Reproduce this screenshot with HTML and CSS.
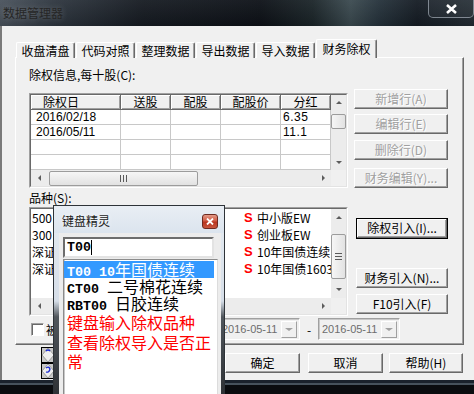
FILE: index.html
```html
<!DOCTYPE html>
<html lang="zh-CN">
<head>
    <meta charset="UTF-8">
    <meta name="viewport" content="width=device-width, initial-scale=1.0">
    <title>数据管理器</title>
    <link rel="stylesheet" href="styles.css">
</head>
<body>
<div class="screen">
    <div class="window">
        <div class="titlebar">
            <span class="title">数据管理器</span>
            <span class="win-close">
                <svg width="13" height="10" viewBox="0 0 13 10"><path d="M2 1 L11 9 M11 1 L2 9" stroke="#fff" stroke-width="2.6"/></svg>
            </span>
        </div>
        <div class="client">
            <div class="tabs">
                <span class="tab">收盘清盘</span>
                <span class="tab">代码对照</span>
                <span class="tab">整理数据</span>
                <span class="tab">导出数据</span>
                <span class="tab">导入数据</span>
                <span class="tab active">财务除权</span>
            </div>
            <div class="panel">
                <div class="caption">除权信息,每十股(C):</div>
                <div class="panel-row">
                    <div class="sunken grid-box">
                        <div class="sunken-in">
                            <div class="grid-main">
                                <div class="grid-head">
                                    <span class="hcell first">除权日</span>
                                    <span class="hcell">送股</span>
                                    <span class="hcell">配股</span>
                                    <span class="hcell">配股价</span>
                                    <span class="hcell">分红</span>
                                </div>
                                <div class="grid-line">
                                    <span class="gcell num">2016/02/18</span><span class="gcell"></span><span class="gcell"></span><span class="gcell"></span><span class="gcell num">6.35</span>
                                </div>
                                <div class="grid-line">
                                    <span class="gcell num">2016/05/11</span><span class="gcell"></span><span class="gcell"></span><span class="gcell"></span><span class="gcell num">11.1</span>
                                </div>
                                <div class="grid-line">
                                    <span class="gcell"></span><span class="gcell"></span><span class="gcell"></span><span class="gcell"></span><span class="gcell"></span>
                                </div>
                                <div class="grid-line">
                                    <span class="gcell"></span><span class="gcell"></span><span class="gcell"></span><span class="gcell"></span><span class="gcell"></span>
                                </div>
                                <div class="hscroll">
                                    <span class="sb-btn"><i class="arr-left"></i></span>
                                    <span class="sb-track"><span class="thumb-h"><i class="grip-v"></i></span></span>
                                    <span class="sb-btn"><i class="arr-right"></i></span>
                                </div>
                            </div>
                            <div class="vscroll-col">
                                <div class="vscroll grid-vs">
                                    <span class="sb-btn-v"><i class="arr-up"></i></span>
                                    <span class="sb-track-v"><span class="thumb-v small"></span></span>
                                    <span class="sb-btn-v"><i class="arr-down"></i></span>
                                </div>
                                <div class="sb-corner"></div>
                            </div>
                        </div>
                    </div>
                    <div class="btn-col top-set">
                        <span class="btn disabled">新增行(A)</span>
                        <span class="btn disabled">编辑行(E)</span>
                        <span class="btn disabled">删除行(D)</span>
                        <span class="btn disabled">财务编辑(Y)...</span>
                    </div>
                </div>

                <div class="caption small">品种(S):</div>
                <div class="panel-row wide-gap">
                    <div class="sunken list-box">
                        <div class="sunken-in">
                            <div class="list-main">
                                <div class="sym-rows">
                                    <div class="sym-row"><span class="sym-left">500</span><span class="sym-flag">S</span><span>中小版EW</span></div>
                                    <div class="sym-row"><span class="sym-left">300</span><span class="sym-flag">S</span><span>创业板EW</span></div>
                                    <div class="sym-row"><span class="sym-left">深证</span><span class="sym-flag">S</span><span>10年国债连续</span></div>
                                    <div class="sym-row"><span class="sym-left">深证</span><span class="sym-flag">S</span><span>10年国债1603</span></div>
                                </div>
                                <div class="hscroll">
                                    <span class="sb-btn"><i class="arr-left"></i></span>
                                    <span class="sb-track"></span>
                                    <span class="sb-btn"><i class="arr-right"></i></span>
                                </div>
                            </div>
                            <div class="vscroll-col">
                                <div class="vscroll list-vs">
                                    <span class="sb-btn-v tall"><i class="arr-up"></i></span>
                                    <span class="sb-track-v"><span class="thumb-v big"><i class="grip-h"></i></span></span>
                                    <span class="sb-btn-v tall"><i class="arr-down"></i></span>
                                </div>
                                <div class="sb-corner"></div>
                            </div>
                        </div>
                    </div>
                    <div class="btn-col bottom-set">
                        <span class="btn default">除权引入(I)...</span>
                        <span class="btn">财务引入(N)...</span>
                        <span class="btn">F10引入(F)</span>
                    </div>
                </div>

                <div class="range-row">
                    <span class="check"></span>
                    <span class="check-label">被</span>
                    <span class="date-pick">
                        <span class="date-text">2016-05-11</span>
                        <span class="drop-btn"><i class="arr-down light"></i></span>
                    </span>
                    <span class="dash">-</span>
                    <span class="date-pick">
                        <span class="date-text">2016-05-11</span>
                        <span class="drop-btn"><i class="arr-down light"></i></span>
                    </span>
                </div>
            </div>
            <div class="footer">
                <span class="btn ok">确定</span>
                <span class="btn cancel">取消</span>
                <span class="btn help">帮助(H)</span>
            </div>
        </div>
    </div>
    <div class="bottom-frame"></div>

    <div class="drag-icon">
        <svg width="14" height="32" viewBox="0 0 14 32">
            <rect x="0.5" y="0.5" width="13" height="15" fill="#c8c8c8" stroke="#000"/>
            <polygon points="1,8 7,1 13,8 7,15" fill="#eeeeee" stroke="#8a8a8a" stroke-width="0.8"/>
            <rect x="0.5" y="16.5" width="13" height="15" fill="#c8c8c8" stroke="#000"/>
            <polygon points="1,24 7,17 13,24 7,31" fill="#eeeeee" stroke="#8a8a8a" stroke-width="0.8"/>
            <path d="M5 4 Q7 2 9 4 M5 21 Q8 19 9 22 Q8 26 5 25" stroke="#1a2ad0" stroke-width="1.3" fill="none"/>
        </svg>
    </div>

    <div class="popup">
        <div class="popup-title">
            <span class="popup-name">键盘精灵</span>
            <span class="popup-close">
                <svg width="8" height="7" viewBox="0 0 8 7"><path d="M1 0.5 L7 6.5 M7 0.5 L1 6.5" stroke="#fff" stroke-width="1.8"/></svg>
            </span>
        </div>
        <div class="popup-body">
            <div class="pick-input"><span class="code">T00</span><span class="caret"></span></div>
            <div class="pick-list">
                <div class="pick-item selected"><span class="code">T00 10</span>年国债连续</div>
                <div class="pick-item"><span class="code">CT00 </span>二号棉花连续</div>
                <div class="pick-item"><span class="code">RBT00 </span>日胶连续</div>
                <div class="pick-note">键盘输入除权品种<br>查看除权导入是否正常</div>
            </div>
        </div>
    </div>
</div>
</body>
</html>
```

FILE: styles.css
```css
* {
    box-sizing: border-box;
    margin: 0;
    padding: 0;
}

body {
    width: 474px;
    height: 394px;
    overflow: hidden;
    background-color: #050608;
    font-family: "Noto Sans CJK SC", sans-serif;
    font-size: 12px;
    color: #000;
}

.screen {
    position: relative;
    width: 474px;
    height: 394px;
    overflow: hidden;
}

/* main window */

.window {
    width: 474px;
    height: 380px;
    display: flex;
    flex-direction: column;
}

.titlebar {
    height: 26px;
    display: flex;
    justify-content: space-between;
    align-items: flex-start;
    background:
        linear-gradient(180deg, rgba(255,255,255,0.05), rgba(0,0,0,0.12)),
        linear-gradient(90deg, #4a535d 0%, #2d353e 12%, #161b22 30%, #0d1117 55%, #1b2529 66%, #3b4a50 74%, #25323b 80%, #151c24 88%, #222b33 100%);
}

.title {
    padding: 5px 0 0 3px;
    line-height: 16px;
    color: #262626;
    text-shadow: 0 0 6px rgba(255,255,255,0.25);
}

.win-close {
    width: 46px;
    height: 18px;
    display: flex;
    align-items: center;
    justify-content: center;
    border: 1px solid rgba(200,210,220,0.55);
    border-top: none;
    border-radius: 0 0 5px 5px;
    background-color: rgba(255,255,255,0.04);
}

.client {
    flex: 1;
    background-color: #f0f0f0;
    border-left: 2px solid #7a7a7a;
    padding: 13px 0 0 13px;
}

/* tabs */

.tabs {
    display: flex;
    align-items: flex-end;
    height: 19px;
    margin-left: 1px;
    margin-bottom: -1px;
    position: relative;
    z-index: 1;
}

.tab {
    width: 59px;
    height: 16px;
    margin-right: 1px;
    text-align: center;
    line-height: 15px;
    background-color: #f0f0f0;
    border-top: 1px solid #fff;
    border-left: 1px solid #fff;
    border-right: 1px solid #696969;
    box-shadow: inset -1px 0 #a0a0a0;
    border-radius: 2px 2px 0 0;
}

.tab.active {
    width: 61px;
    height: 19px;
    line-height: 17px;
}

.panel {
    width: 449px;
    height: 288px;
    border: 1px solid;
    border-color: #fff #696969 #696969 #fff;
    box-shadow: inset -1px -1px #a0a0a0;
    padding: 7px 0 0 13px;
}

.caption {
    height: 28px;
    line-height: 20px;
}

.caption.small {
    height: 19px;
    line-height: 20px;
}

.panel-row {
    display: flex;
    align-items: flex-start;
    gap: 6px;
}

.panel-row.wide-gap {
    gap: 8px;
}

/* sunken boxes */

.sunken {
    width: 319px;
    border: 1px solid;
    border-color: #a0a0a0 #fff #fff #a0a0a0;
}

.sunken-in {
    height: 100%;
    display: flex;
    border: 1px solid;
    border-color: #696969 #e3e3e3 #e3e3e3 #696969;
    background-color: #fff;
}

.grid-box {
    height: 95px;
}

.list-box {
    height: 109px;
}

.grid-main,
.list-main {
    width: 300px;
    display: flex;
    flex-direction: column;
}

.grid-head,
.grid-line {
    display: grid;
    grid-template-columns: 90px 50px 50px 60px 50px;
}

.hcell {
    height: 15px;
    line-height: 13px;
    text-align: center;
    background-color: #f0f0f0;
    border-right: 1px solid #696969;
    border-bottom: 1px solid #696969;
    box-shadow: inset 1px 1px #fff, inset -1px -1px #a0a0a0;
}

.hcell.first {
    text-align: left;
    padding-left: 12px;
}

.gcell {
    height: 15px;
    line-height: 14px;
    padding-left: 5px;
    border-right: 1px solid #c8c8c8;
    border-bottom: 1px solid #c8c8c8;
    white-space: nowrap;
}

.gcell.num {
    font-family: "Liberation Sans", sans-serif;
    font-size: 12px;
}

.gcell.num:last-child {
    padding-left: 2px;
    letter-spacing: 0.5px;
}

/* scrollbars */

.hscroll {
    height: 16px;
    display: flex;
    background-color: #ececec;
    margin-top: auto;
}

.sb-btn {
    width: 16px;
    display: flex;
    align-items: center;
    justify-content: center;
}

.sb-track {
    flex: 1;
    display: flex;
    align-items: center;
}

.thumb-h {
    width: 149px;
    height: 15px;
    margin-left: 2px;
    display: flex;
    align-items: center;
    justify-content: center;
    border: 1px solid #9c9c9c;
    border-radius: 2px;
    background: linear-gradient(180deg, #f6f6f6, #e2e2e2);
}

.vscroll-col {
    width: 15px;
    display: flex;
    flex-direction: column;
    background-color: #f0f0f0;
}

.vscroll {
    display: flex;
    flex-direction: column;
    background-color: #ececec;
}

.grid-vs {
    height: 75px;
}

.list-vs {
    height: 89px;
}

.sb-corner {
    flex: 1;
}

.sb-btn-v {
    height: 15px;
    display: flex;
    align-items: center;
    justify-content: center;
}

.sb-btn-v.tall {
    height: 17px;
}

.sb-track-v {
    flex: 1;
}

.thumb-v {
    display: flex;
    align-items: center;
    justify-content: center;
    width: 15px;
    border: 1px solid #9c9c9c;
    border-radius: 2px;
    background: linear-gradient(90deg, #f6f6f6, #e2e2e2);
}

.thumb-v.small {
    height: 15px;
    margin-top: 4px;
}

.thumb-v.big {
    height: 45px;
    margin-top: 8px;
}

.grip-v {
    width: 7px;
    height: 7px;
    background: repeating-linear-gradient(90deg, #5a5a5a 0 1px, transparent 1px 3px);
}

.grip-h {
    width: 7px;
    height: 7px;
    background: repeating-linear-gradient(180deg, #5a5a5a 0 1px, transparent 1px 3px);
}

.arr-up,
.arr-down,
.arr-left,
.arr-right {
    width: 0;
    height: 0;
}

.arr-up {
    border-left: 3px solid transparent;
    border-right: 3px solid transparent;
    border-bottom: 3px solid #5c5c5c;
}

.arr-down {
    border-left: 3px solid transparent;
    border-right: 3px solid transparent;
    border-top: 3px solid #5c5c5c;
}

.arr-down.light {
    border-top-color: #a0a0a0;
    border-left-width: 4px;
    border-right-width: 4px;
}

.arr-left {
    border-top: 3px solid transparent;
    border-bottom: 3px solid transparent;
    border-right: 3px solid #5c5c5c;
}

.arr-right {
    border-top: 3px solid transparent;
    border-bottom: 3px solid transparent;
    border-left: 3px solid #5c5c5c;
}

/* symbol list */

.sym-rows {
    flex: 1;
}

.sym-row {
    display: grid;
    grid-template-columns: 212px 14px 1fr;
    height: 17px;
    line-height: 17px;
    white-space: nowrap;
}

.sym-left {
    padding-left: 1px;
}

.sym-flag {
    padding-left: 1px;
    color: #ff0000;
    font-family: "Liberation Sans", sans-serif;
    font-weight: bold;
    font-size: 13px;
}

/* buttons */

.btn-col {
    width: 94px;
    display: flex;
    flex-direction: column;
}

.btn-col.top-set {
    margin-top: -4px;
}

.btn-col.bottom-set {
    width: 92px;
}

.btn {
    display: block;
    height: 20px;
    line-height: 18px;
    text-align: center;
    white-space: nowrap;
    background-color: #f0f0f0;
    border: 1px solid;
    border-color: #fff #696969 #696969 #fff;
    box-shadow: inset -1px -1px #a0a0a0;
}

.btn.disabled {
    color: #a0a0a0;
    text-shadow: 1px 1px #fff;
}

.top-set .btn:nth-child(2) { margin-top: 5px; }
.top-set .btn:nth-child(3) { margin-top: 6px; }
.top-set .btn:nth-child(4) { margin-top: 8px; }

.btn.default {
    height: 21px;
    margin-top: 11px;
    border-color: #000;
    box-shadow: inset -1px -1px #696969, inset 1px 1px #fff, inset -2px -2px #a0a0a0;
}

.bottom-set .btn:nth-child(2) { margin-top: 29px; }
.bottom-set .btn:nth-child(3) { margin-top: 6px; }

/* date range */

.range-row {
    display: flex;
    align-items: center;
    height: 22px;
    margin-top: 2px;
}

.check {
    width: 13px;
    height: 13px;
    margin-left: 2px;
    background-color: #fff;
    border: 1px solid;
    border-color: #a0a0a0 #fff #fff #a0a0a0;
    box-shadow: inset 1px 1px #696969;
}

.check-label {
    width: 172px;
    margin-left: 2px;
    white-space: nowrap;
    overflow: hidden;
}

.date-pick {
    width: 82px;
    height: 22px;
    display: flex;
    align-items: center;
    justify-content: space-between;
    background-color: #f0f0f0;
    border: 1px solid;
    border-color: #a0a0a0 #fff #fff #a0a0a0;
    box-shadow: inset 1px 1px #c8c8c8;
    padding: 2px 2px 2px 3px;
}

.date-text {
    font-family: "Liberation Sans", sans-serif;
    font-size: 11px;
    color: #6d6d6d;
}

.drop-btn {
    width: 16px;
    height: 17px;
    display: flex;
    align-items: center;
    justify-content: center;
    border: 1px solid;
    border-color: #fff #a0a0a0 #a0a0a0 #fff;
}

.dash {
    width: 18px;
    text-align: center;
}

/* footer buttons */

.footer {
    width: 449px;
    display: flex;
    justify-content: flex-end;
    margin-top: 8px;
}

.footer .ok { width: 75px; margin-right: 8px; }
.footer .cancel { width: 75px; margin-right: 6px; }
.footer .help { width: 74px; margin-right: 1px; }

.bottom-frame {
    height: 14px;
    background: linear-gradient(180deg, #1a222c 0 3px, #46525c 3px 5px, #0a0c0f 5px);
}

/* dragged icon */

.drag-icon {
    position: absolute;
    left: 41px;
    top: 347px;
    width: 14px;
    height: 32px;
}

/* keyboard popup */

.popup {
    position: absolute;
    left: 53px;
    top: 205px;
    width: 172px;
    height: 200px;
    border: 1px solid #2e3338;
    background: linear-gradient(180deg, #e6ecf2 0%, #d6dee8 48%, #50565c 56%, #2a2d31 100%);
    display: flex;
    flex-direction: column;
}

.popup-title {
    height: 27px;
    display: flex;
    align-items: center;
    justify-content: space-between;
    padding: 3px 6px 0 8px;
    background: linear-gradient(180deg, #e9eef4, #dbe4ee);
}

.popup-name {
    color: #1b1b1b;
    text-shadow: 0 0 5px #fff;
    line-height: 14px;
}

.popup-close {
    width: 16px;
    height: 15px;
    display: flex;
    align-items: center;
    justify-content: center;
    border: 1px solid #6e2a20;
    border-radius: 3px;
    background: linear-gradient(180deg, #e39a88 0%, #cf5a44 45%, #b8341f 55%, #c8563f 100%);
}

.popup-body {
    flex: 1;
    margin: 0 3px 0 5px;
    padding: 4px 3px 0 4px;
    background-color: #ececec;
    display: flex;
    flex-direction: column;
}

.code {
    font-family: "Liberation Mono", monospace;
    font-weight: bold;
    font-size: 13.33px;
    white-space: pre;
}

.pick-input {
    height: 21px;
    margin-right: 4px;
    display: flex;
    align-items: center;
    padding-left: 2px;
    background-color: #fff;
    border: 2px solid;
    border-color: #6d6d6d #e3e3e3 #e3e3e3 #6d6d6d;
}

.caret {
    width: 1px;
    height: 15px;
    background-color: #000;
}

.pick-list {
    flex: 1;
    margin-top: 1px;
    padding-top: 1px;
    background-color: #fff;
    border: 1px solid;
    border-color: #8c8c8c #dcdcdc #dcdcdc #8c8c8c;
    box-shadow: inset 1px 0 #c8c8c8;
}

.pick-item {
    height: 17px;
    line-height: 17px;
    margin-right: 3px;
    padding-left: 3px;
    font-size: 16px;
    white-space: nowrap;
}

.pick-item.selected {
    background-color: #3399ff;
    color: #fff;
}

.pick-note {
    padding: 1px 0 0 3px;
    font-size: 16px;
    line-height: 19.5px;
    color: #ff0000;
    width: 152px;
}
```
